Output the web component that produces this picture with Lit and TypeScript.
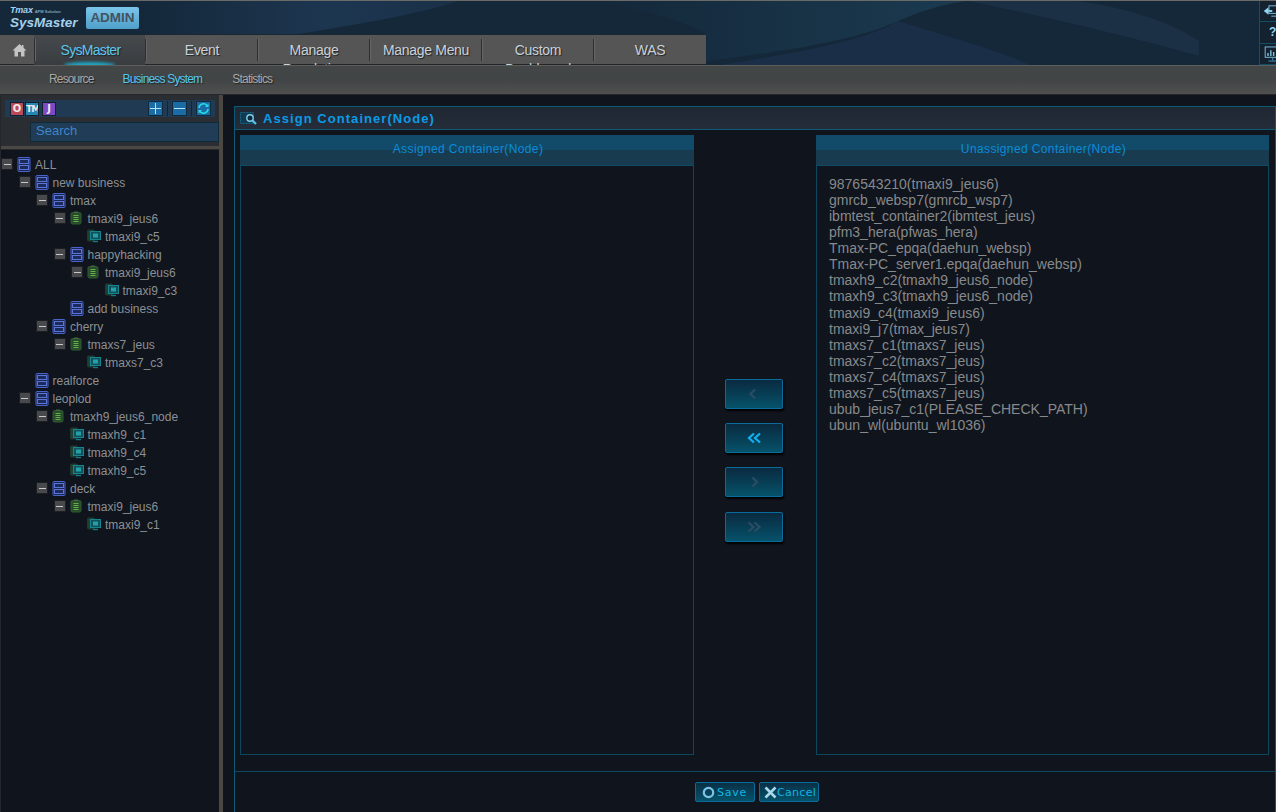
import { LitElement, html, css } from "lit";
import { customElement } from "lit/decorators.js";

type Kind = "biz" | "node" | "leaf";
const TREE: [number, Kind, string, boolean][] = [
  [0, "biz", "ALL", true],
  [1, "biz", "new business", true],
  [2, "biz", "tmax", true],
  [3, "node", "tmaxi9_jeus6", true],
  [4, "leaf", "tmaxi9_c5", false],
  [3, "biz", "happyhacking", true],
  [4, "node", "tmaxi9_jeus6", true],
  [5, "leaf", "tmaxi9_c3", false],
  [3, "biz", "add business", false],
  [2, "biz", "cherry", true],
  [3, "node", "tmaxs7_jeus", true],
  [4, "leaf", "tmaxs7_c3", false],
  [1, "biz", "realforce", false],
  [1, "biz", "leoplod", true],
  [2, "node", "tmaxh9_jeus6_node", true],
  [3, "leaf", "tmaxh9_c1", false],
  [3, "leaf", "tmaxh9_c4", false],
  [3, "leaf", "tmaxh9_c5", false],
  [2, "biz", "deck", true],
  [3, "node", "tmaxi9_jeus6", true],
  [4, "leaf", "tmaxi9_c1", false],
];

const UNASSIGNED = [
  "9876543210(tmaxi9_jeus6)",
  "gmrcb_websp7(gmrcb_wsp7)",
  "ibmtest_container2(ibmtest_jeus)",
  "pfm3_hera(pfwas_hera)",
  "Tmax-PC_epqa(daehun_websp)",
  "Tmax-PC_server1.epqa(daehun_websp)",
  "tmaxh9_c2(tmaxh9_jeus6_node)",
  "tmaxh9_c3(tmaxh9_jeus6_node)",
  "tmaxi9_c4(tmaxi9_jeus6)",
  "tmaxi9_j7(tmax_jeus7)",
  "tmaxs7_c1(tmaxs7_jeus)",
  "tmaxs7_c2(tmaxs7_jeus)",
  "tmaxs7_c4(tmaxs7_jeus)",
  "tmaxs7_c5(tmaxs7_jeus)",
  "ubub_jeus7_c1(PLEASE_CHECK_PATH)",
  "ubun_wl(ubuntu_wl1036)",
];

const NAV: [string, string?][] = [
  ["SysMaster"],
  ["Event"],
  ["Manage", "Resolution"],
  ["Manage Menu"],
  ["Custom", "Dashboard"],
  ["WAS"],
];

const icon = (k: Kind) => {
  if (k === "biz")
    return html`<svg width="14" height="15" viewBox="0 0 14 15">
      <rect x="1" y="0.5" width="12" height="14" rx="1" fill="#1a2550" stroke="#4a63c8"/>
      <rect x="2.5" y="2.5" width="9" height="4" fill="#1d2a5c" stroke="#5a75d8"/>
      <rect x="2.5" y="8.5" width="9" height="4" fill="#1d2a5c" stroke="#5a75d8"/>
    </svg>`;
  if (k === "node")
    return html`<svg width="14" height="14" viewBox="0 0 14 14">
      <rect x="1" y="1.5" width="10" height="11.5" rx="1.5" fill="#2a4a2c" stroke="#2f5a34"/>
      <rect x="4" y="0.5" width="4" height="1.5" fill="#3c6a3c"/>
      <path d="M3.5 4.5h5M3.5 6.5h5M3.5 8.5h5M3.5 10.5h5" stroke="#63b04a" stroke-width="1"/>
    </svg>`;
  return html`<svg width="16" height="14" viewBox="0 0 16 14">
    <rect x="0.5" y="1" width="7" height="11" rx="1" fill="#1f4034" stroke="#1d3a30"/>
    <rect x="3.5" y="2.5" width="10" height="8" fill="#12505a" stroke="#17858f"/>
    <rect x="6" y="4.5" width="5" height="4" fill="#23a0a6"/>
    <path d="M6 12.5h5" stroke="#157a88" stroke-width="1.4"/>
  </svg>`;
};

const chev = (d: string, color: string) =>
  html`<svg width="14" height="12" viewBox="0 0 14 12"><path d="${d}" fill="none" stroke="${color}" stroke-width="2.2"/></svg>`;

@customElement("app-root")
export class AppRoot extends LitElement {
  static styles = css`
    :host { display: flex; flex-direction: column; width: 1276px; height: 812px; overflow: hidden; background: #10141c; font-family: "Liberation Sans", Arial, sans-serif; }
    * { box-sizing: border-box; }
    .header { position: relative; height: 65px; flex: none; display: flex; background: #14283a; border-top: 1px solid #6a6a66; overflow: hidden; }
    .decor { position: absolute; left: 0; top: 0; }
    .head-left { position: relative; width: 706px; display: flex; flex-direction: column; }
    .brand { height: 33px; display: flex; align-items: flex-start; padding: 6px 0 0 10px; gap: 8px; }
    .logo { width: 68px; margin-top: -1px; color: #a5d0ea; font-style: italic; font-weight: bold; display: flex; flex-direction: column; }
    .logo .t1 { font-size: 9px; line-height: 8px; display: flex; align-items: baseline; gap: 2px; letter-spacing: -0.2px; }
    .logo .t1 small { font-size: 4px; font-style: normal; color: #7fa8c0; letter-spacing: 0; }
    .logo .t2 { font-size: 13.5px; line-height: 14px; }
    .badge { width: 53px; height: 22px; background: linear-gradient(#7cc5ea, #4e9fca); border-radius: 2px; color: #43535e; font-weight: bold; font-size: 13.5px; line-height: 22px; text-align: center; }
    .nav { height: 31px; background: linear-gradient(#555 0 29px, #22262b 29px 30px, #3c3f41 30px); border-top: 1px solid #1a2630; display: flex; padding-left: 1px; overflow: hidden; }
    .home { width: 33px; display: flex; align-items: center; justify-content: center; height: 30px; padding: 0 0 1px 3px; }
    .nav-item { position: relative; width: 112px; height: 30px; text-align: center; font-size: 14px; line-height: 19px; padding: 6px 0 0 2px; color: #c9d2da; text-shadow: 1px 1px 1px #222; letter-spacing: -0.3px; overflow: hidden; }
    .nav-item::before { content: ""; position: absolute; left: 0; top: 4px; height: 22px; width: 1px; background: #2b2d30; box-shadow: 1px 0 0 #666; }
    .nav-item.on { width: 111px; background: linear-gradient(#474a4d, #383c40); color: #5cc6ee; letter-spacing: -0.7px; }
    .nav-item.on::after { content: ""; position: absolute; left: 30px; right: 30px; bottom: -3px; height: 6px; border-radius: 50%; background: #1fa6c4; filter: blur(1.5px); }
    .strip { position: relative; margin-left: auto; width: 17px; height: 64px; display: flex; flex-direction: column; border-left: 1px solid #0f5068; }
    .strip div { flex: 1; background: #14222f; border-bottom: 1px solid #0f5068; overflow: hidden; display: flex; align-items: center; color: #8fd0ee; font: bold 12px "Liberation Sans", sans-serif; }
    .strip .q { padding-left: 9px; }
    .subnav { height: 30px; flex: none; background: linear-gradient(#434646, #424546 50%, #4f4f4f); border-top: 1px solid #5d5d5a; border-bottom: 1px solid #25272a; display: flex; align-items: center; padding-bottom: 2px; font-size: 12px; color: #a8a8a8; text-shadow: 1px 1px 1px #222; }
    .subnav span { letter-spacing: -0.85px; }
    .subnav .s1 { margin-left: 49px; }
    .subnav .s2 { margin-left: 29px; color: #55c6f0; letter-spacing: -0.82px; }
    .subnav .s3 { margin-left: 30px; letter-spacing: -0.8px; }
    .body { flex: 1; display: flex; min-height: 0; }
    .side { width: 223px; flex: none; display: flex; flex-direction: column; border-right: 4px solid #4b4743; border-left: 1px solid #23262b; }
    .side-top { height: 50px; flex: none; background: #2a2d32; padding: 5px 0 0 4px; display: flex; flex-direction: column; gap: 5px; }
    .toolbar { width: 210px; height: 17px; background: #1f3a52; display: flex; align-items: center; padding-left: 5px; }
    .tag { width: 14px; height: 14px; border: 1px solid #14202c; font: bold 10px/12px "DejaVu Sans", sans-serif; text-align: center; color: #f0e8e8; overflow: hidden; }
    .tag.o { background: #bb4a58; margin-right: 1px; }
    .tag.m { background: #2686b4; font-size: 9px; letter-spacing: -1px; margin-right: 3px; }
    .tag.j { background: #7c4ac4; }
    .tools { margin-left: auto; display: flex; align-items: center; margin-right: 4px; }
    .tool { width: 15px; height: 15px; background: #1a6ca6; border: 1px solid #112a3c; display: flex; align-items: center; justify-content: center; }
    .tool-sep { width: 1px; height: 15px; background: #16242f; margin: 0 4px 0 4px; }
    .search { margin-left: 25px; width: 189px; height: 20px; background: #203c56; border: 1px solid #0e2a38; color: #3e86cc; font-size: 13px; line-height: 16px; padding-left: 5px; }
    .side-sep { height: 5px; flex: none; background: linear-gradient(#2a2d32 0 1px, #4b4743 1px 4px, #26282c 4px); }
    .tree { flex: 1; padding-top: 5px; background: #10141c; }
    .row { height: 18px; display: flex; align-items: center; font-size: 12px; color: #8b9096; white-space: nowrap; }
    .label { padding-top: 1px; }
    .slot { width: 16px; flex: none; display: flex; align-items: center; }
    .minus { width: 12px; height: 12px; background: #47494c; border: 1px solid #1c1e22; display: flex; align-items: center; justify-content: center; }
    .minus i { display: block; width: 7px; height: 1px; background: #c8c8c8; }
    .ic { width: 18px; flex: none; display: flex; align-items: center; }
    .main { flex: 1; min-width: 0; padding: 11px 0 0 11px; }
    .panel { height: 100%; border: 1px solid #0d5a74; border-bottom: 0; display: flex; flex-direction: column; }
    .title { height: 23px; flex: none; background: linear-gradient(#1f2733, #252d3a); border-bottom: 1px solid #0d5a74; display: flex; align-items: center; padding: 1px 0 0 5px; gap: 5px; font-size: 13px; font-weight: bold; letter-spacing: 1.05px; color: #0b9be6; }
    .cols { flex: none; height: 620px; margin-top: 5px; display: grid; grid-template-columns: 454px 122px 453px; padding-left: 5px; }
    .col { border: 1px solid #0e455f; border-top: 0; display: flex; flex-direction: column; min-height: 0; }
    .col-h { height: 31px; flex: none; margin: 0 -1px; padding-left: 2px; background: linear-gradient(#124a6a 0 15px, #193b50 15px); border-bottom: 1px solid #0e4a66; color: #0a8cd8; font-size: 12px; line-height: 29px; letter-spacing: 0.38px; text-align: center; }
    .list { padding: 10px 12px; font-size: 14px; line-height: 16.07px; color: #878a8c; }
    .mid { display: flex; flex-direction: column; align-items: center; padding-top: 244px; gap: 14px; padding-right: 3px; }
    .mv { width: 58px; height: 30px; flex: none; border: 1px solid #0a6c9c; border-radius: 2px; background: linear-gradient(#0a2a40, #05526a); box-shadow: 1px 2px 2px #000; display: flex; align-items: center; justify-content: center; }
    .mv.last { margin-top: 1px; }
    .foot { flex: none; margin-top: 16px; border-top: 1px solid #0d4a62; padding: 10px 0 0 4px; display: flex; justify-content: center; gap: 4px; }
    .btn { width: 60px; height: 20px; border: 1px solid #0a6c9c; border-radius: 2px; background: linear-gradient(#0a3046, #05526a); display: flex; align-items: center; gap: 2px; padding-left: 6px; font: 11px "DejaVu Sans", sans-serif; letter-spacing: 0.75px; color: #12b4e6; }
    .btn.c { padding-left: 4px; gap: 0; letter-spacing: 0.3px; }
  `;

  render() {
    return html`
      <div class="header">
        <svg class="decor" width="1276" height="65" viewBox="0 0 1276 65">
          <defs>
            <linearGradient id="a" x1="0" x2="1"><stop offset="0" stop-color="#14283a"/><stop offset="0.6" stop-color="#1d3650"/><stop offset="1" stop-color="#1a3048"/></linearGradient>
            <linearGradient id="b" x1="0" x2="1"><stop offset="0" stop-color="#14283a"/><stop offset="1" stop-color="#1b3a50"/></linearGradient>
          </defs>
          <path d="M140 0H458C400 20 300 30 140 62Z" fill="url(#a)"/>
          <path d="M600 0H965C930 6 912 14 898 20C860 38 790 50 706 60V40C720 30 650 10 600 0Z" fill="url(#b)"/>
          <path d="M898 20C950 36 1000 50 1030 64H720C800 52 870 38 898 20Z" fill="#1a2f47"/>
          <path d="M968 0C1010 8 1130 35 1199 55V40C1170 20 1120 5 1076 0Z" fill="#1b3045"/>
        </svg>
        <div class="head-left">
          <div class="brand">
            <div class="logo"><span class="t1">Tmax<small>APM Solution</small></span><span class="t2">SysMaster</span></div>
            <div class="badge">ADMIN</div>
          </div>
          <div class="nav">
            <div class="home">
              <svg width="15" height="14" viewBox="0 0 15 14"><path d="M7.5 1L0.5 7.5H2.5V13.5H6V9H9V13.5H12.5V7.5H14.5L11.5 4.7V2H10V3.3Z" fill="#c4c4c4"/></svg>
            </div>
            ${NAV.map(([a, b], i) => html`<div class="nav-item ${i === 0 ? "on" : ""}">${a}${b ? html`<br />${b}` : ""}</div>`)}
          </div>
        </div>
        <div class="strip">
          <div>
            <svg width="17" height="16" viewBox="0 0 17 16"><path d="M4 8L9 4V12Z" fill="#8fd4f0"/><path d="M8 8H13" stroke="#8fd4f0" stroke-width="2"/><rect x="9.5" y="2.5" width="10" height="8" fill="none" stroke="#7fc0e0"/><path d="M12 13.5H17" stroke="#7fc0e0"/></svg>
          </div>
          <div class="q">?</div>
          <div>
            <svg width="17" height="18" viewBox="0 0 17 18"><rect x="5.5" y="1.5" width="16" height="11" fill="none" stroke="#7fc0e0"/><path d="M8.5 11V8M11.5 11V5M14.5 11V7" stroke="#7fc0e0" stroke-width="1.5"/><path d="M13.5 13V16M9 16.5H17" stroke="#3f8fb8"/></svg>
          </div>
        </div>
      </div>
      <div class="subnav"><span class="s1">Resource</span><span class="s2">Business System</span><span class="s3">Statistics</span></div>
      <div class="body">
        <div class="side">
          <div class="side-top">
            <div class="toolbar">
              <div class="tag o">O</div><div class="tag m">TM</div><div class="tag j">J</div>
              <div class="tools">
                <div class="tool"><svg width="11" height="11" viewBox="0 0 11 11"><path d="M5.5 0V11M0 5.5H11" stroke="#b8e2f8"/></svg></div>
                <div class="tool-sep"></div>
                <div class="tool"><svg width="11" height="11" viewBox="0 0 11 11"><path d="M0 5.5H11" stroke="#b8e2f8"/></svg></div>
                <div class="tool-sep"></div>
                <div class="tool"><svg width="13" height="13" viewBox="0 0 13 13"><path d="M2 6A4.5 4.5 0 0 1 10 3.5M11 7A4.5 4.5 0 0 1 3 9.5" fill="none" stroke="#27dbe6" stroke-width="1.6"/><path d="M11.5 1.5V5H8ZM1.5 11.5V8H5Z" fill="#27dbe6"/></svg></div>
              </div>
            </div>
            <div class="search">Search</div>
          </div>
          <div class="side-sep"></div>
          <div class="tree">
            ${TREE.map(
              ([lv, k, t, open]) => html`<div class="row" style="padding-left:${17.5 * lv}px">
                <span class="slot">${open ? html`<span class="minus"><i></i></span>` : ""}</span>
                <span class="ic">${icon(k)}</span>
                <span class="label">${t}</span>
              </div>`
            )}
          </div>
        </div>
        <div class="main">
          <div class="panel">
            <div class="title">
              <svg width="18" height="15" viewBox="0 0 18 15"><rect x="0.5" y="1.5" width="13" height="11" fill="#123a50" stroke="#0f6a8c" stroke-dasharray="2 1"/><circle cx="10" cy="7" r="3.2" fill="#0e2c40" stroke="#7fd0ee" stroke-width="1.4"/><path d="M12.5 9.5L16 13" stroke="#5ac0e8" stroke-width="2.2"/></svg>
              <span>Assign Container(Node)</span>
            </div>
            <div class="cols">
              <div class="col"><div class="col-h">Assigned Container(Node)</div></div>
              <div class="mid">
                <div class="mv">${chev("M8 1.5L3.5 6L8 10.5", "#2b4c62")}</div>
                <div class="mv">${chev("M7 1.5L2 6L7 10.5M13 1.5L8 6L13 10.5", "#12b0f0")}</div>
                <div class="mv">${chev("M5.5 1.5L10 6L5.5 10.5", "#2b4c62")}</div>
                <div class="mv last">${chev("M1.5 1.5L6.5 6L1.5 10.5M7.5 1.5L12.5 6L7.5 10.5", "#2b4c62")}</div>
              </div>
              <div class="col">
                <div class="col-h">Unassigned Container(Node)</div>
                <div class="list">${UNASSIGNED.map((t) => html`<div>${t}</div>`)}</div>
              </div>
            </div>
            <div class="foot">
              <div class="btn"><svg width="13" height="13" viewBox="0 0 13 13"><circle cx="6.5" cy="6.5" r="4.7" fill="none" stroke="#7cc4e6" stroke-width="2.2"/></svg><span>Save</span></div>
              <div class="btn c"><svg width="13" height="13" viewBox="0 0 13 13"><path d="M1.5 1.5L11.5 11.5M11.5 1.5L1.5 11.5" stroke="#a8d8ee" stroke-width="2.6"/></svg><span>Cancel</span></div>
            </div>
          </div>
        </div>
      </div>
    `;
  }
}
